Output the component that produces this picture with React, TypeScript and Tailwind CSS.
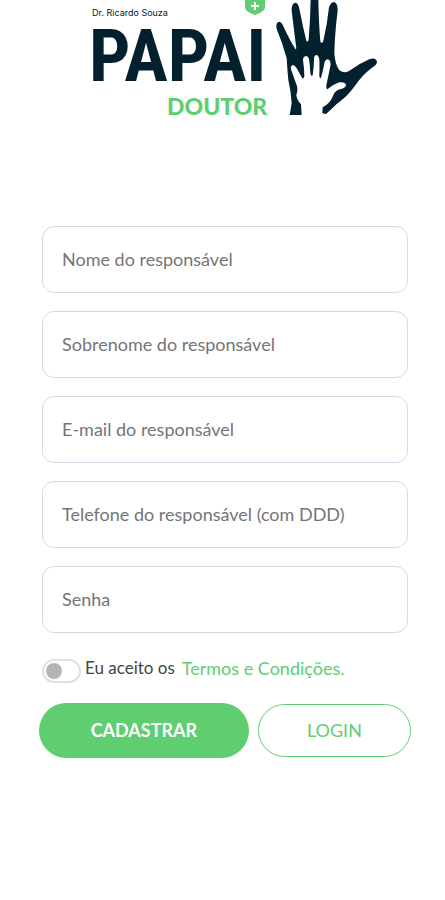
import { FC } from 'react';

const fields = [
  { id: 'nome', label: 'Nome do responsável', type: 'text' },
  { id: 'sobrenome', label: 'Sobrenome do responsável', type: 'text' },
  { id: 'email', label: 'E-mail do responsável', type: 'email' },
  { id: 'telefone', label: 'Telefone do responsável (com DDD)', type: 'tel' },
  { id: 'senha', label: 'Senha', type: 'password' },
];

const Logo: FC = () => (
  <svg width="290" height="120" viewBox="-4 0 290 120" role="img" aria-label="Papai Doutor">
    <text x="0" y="16" fontSize="9" className="fill-[#03202f] font-['Inter',sans-serif]">
      Dr. Ricardo Souza
    </text>
    <text x="-3" y="81" fontSize="73" className="fill-[#03202f] font-['Roboto_Condensed',sans-serif] font-bold">
      PAPAI
    </text>
    <text x="75" y="115" fontSize="23" className="fill-[#5fce70] font-['Lato',sans-serif] font-black">
      DOUTOR
    </text>
    <path d="M153 0h20v7c0 4-5 6-10 8-5-2-10-4-10-8z" fill="#5fce70" />
    <path d="M163 2v8M159 6h8" stroke="#fff" strokeWidth="2" />
    <g transform="translate(173 0) scale(.3333)">
      <path
        fill="#03202f"
        d="M74 345L80 310Q78 275 70 240Q67 210 65 175Q53 130 35 87Q31 67 43 65Q50 66 56 81Q74 120 91 147Q95 150 93 137Q87 90 80 32Q79 9 92 8Q101 10 104 31Q113 78 124 122Q129 129 131 118Q136 60 137 -4L160 -4Q161 65 166 124Q170 134 175 123Q187 72 192 22Q197 7 206 6Q219 8 218 32Q209 105 208 160Q210 193 223 211Q237 221 252 213Q282 191 313 178Q332 171 336 185Q336 194 321 203Q289 227 269 259Q246 291 215 312Q199 328 183 342L172 340L173 322Q197 309 204 287Q210 269 231 266Q244 262 243 254Q239 245 223 247Q202 254 187 268Q181 267 186 247Q192 219 197 193Q196 179 188 178Q181 178 178 190Q174 214 168 233Q163 238 163 226Q164 200 163 178Q160 165 154 165Q147 166 147 178Q147 202 143 226Q138 232 136 218Q135 195 132 176Q129 168 123 168Q114 170 114 180Q118 205 118 229Q116 239 111 233Q102 218 95 205Q89 195 83 195Q76 197 78 208Q87 235 96 258Q99 272 94 286Q96 301 108 313L110 345Z"
      />
    </g>
  </svg>
);

const App: FC = () => {
  return (
    <div className="min-h-screen bg-white font-['Lato',sans-serif] text-lg">
      <header className="flex justify-center pl-5">
        <Logo />
      </header>

      <form className="mt-[106px] pr-[34px] pl-[39px]" onSubmit={(e) => e.preventDefault()}>
        <div className="flex flex-col gap-[18px] px-[3px]">
          {fields.map((field) => (
            <input
              key={field.id}
              id={field.id}
              name={field.id}
              type={field.type}
              aria-label={field.label}
              placeholder={field.label}
              className="h-[67px] w-full rounded-xl border border-[#d9d8e8] bg-white px-[19px] pb-0.5 text-[#757575] outline-none placeholder:text-[#757575] focus:border-[#5fce70]"
            />
          ))}
        </div>

        <div className="mt-5 flex items-center pl-[3px]">
          <input
            id="termos"
            type="checkbox"
            className="mt-1.5 h-6 w-[39px] shrink-0 appearance-none rounded-full border-2 border-[#e0e0e0] bg-white before:mt-[2px] before:ml-[2px] before:block before:size-4 before:rounded-full before:bg-[#b5b5b5] checked:border-[#5fce70] checked:before:ml-[17px] checked:before:bg-[#5fce70]"
          />
          <label htmlFor="termos" className="ml-1 text-[17px] text-[#444]">
            Eu aceito os
          </label>
          <a href="#termos-e-condicoes" className="ml-[7px] text-[#5fce70]">
            Termos e Condições.
          </a>
        </div>

        <div className="mt-5 flex items-center gap-[9px]">
          <button type="submit" className="h-[55px] flex-[211] rounded-full bg-[#5fce70] pb-0.5 font-bold text-white">
            CADASTRAR
          </button>
          <button type="button" className="h-[53px] flex-[152] rounded-full border border-[#5fce70] pb-0.5 text-[#5fce70]">
            LOGIN
          </button>
        </div>
      </form>
    </div>
  );
};

export default App;
